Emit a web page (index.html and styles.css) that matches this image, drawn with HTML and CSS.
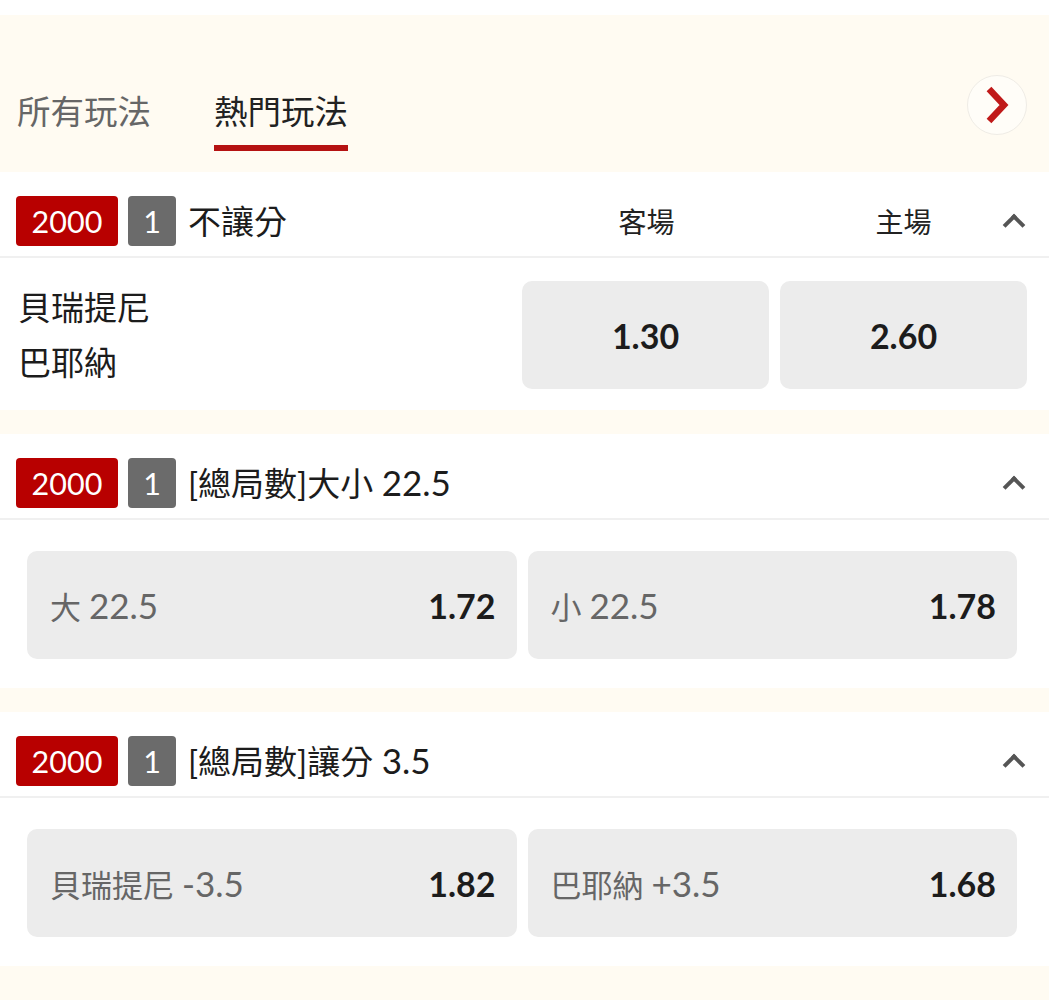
FILE: index.html
```html
<!DOCTYPE html>
<html lang="zh-Hant">
<head>
  <meta charset="UTF-8" />
  <meta name="viewport" content="width=device-width, initial-scale=1.0"/>
  <title>熱門玩法</title>
  <link rel="stylesheet" href="styles.css">
</head>
<body>

<div class="topbar"></div>

<div class="tabs">
  <a class="tab">所有玩法</a>
  <a class="tab active">熱門玩法</a>
  <button class="next">
    <svg width="24" height="38" viewBox="0 0 24 38"><path d="M4 3 L19 19 L4 35" fill="none" stroke="#c01a1a" stroke-width="6.5"/></svg>
  </button>
</div>

<section class="market">
  <div class="market-head">
    <span class="badge red">2000</span>
    <span class="badge gray">1</span>
    <span class="title">不讓分</span>
    <span class="col">客場</span>
    <span class="col">主場</span>
    <span class="caret"></span>
  </div>
  <div class="match">
    <div class="teams">
      <div>貝瑞提尼</div>
      <div>巴耶納</div>
    </div>
    <div class="odd">1.30</div>
    <div class="odd">2.60</div>
  </div>
</section>

<section class="market">
  <div class="market-head">
    <span class="badge red">2000</span>
    <span class="badge gray">1</span>
    <span class="title">[總局數]大小 <span class="num">22.5</span></span>
    <span class="caret"></span>
  </div>
  <div class="pair">
    <div class="pick"><span class="label">大 <span class="num">22.5</span></span><span class="price">1.72</span></div>
    <div class="pick"><span class="label">小 <span class="num">22.5</span></span><span class="price">1.78</span></div>
  </div>
</section>

<section class="market">
  <div class="market-head">
    <span class="badge red">2000</span>
    <span class="badge gray">1</span>
    <span class="title">[總局數]讓分 <span class="num">3.5</span></span>
    <span class="caret"></span>
  </div>
  <div class="pair">
    <div class="pick"><span class="label">貝瑞提尼 <span class="num">-3.5</span></span><span class="price">1.82</span></div>
    <div class="pick"><span class="label">巴耶納 <span class="num">+3.5</span></span><span class="price">1.68</span></div>
  </div>
</section>

</body>
</html>
```

FILE: styles.css
```css
body {
  font-family: Lato, "Noto Sans CJK TC", sans-serif;
  background: #fffbf2;
  color: #1c1c1c;
  margin: 0;
  padding: 0;
}
.topbar {
  height: 15px;
  background: #fff;
}
.tabs {
  height: 157px;
  display: flex;
  align-items: flex-end;
  padding: 0 22px 0 17px;
  gap: 63px;
}
.tab {
  font-size: 33.5px;
  color: #666;
  padding-bottom: 14px;
  line-height: 40px;
  border-bottom: 6px solid transparent;
  margin-bottom: 21px;
}
.tab.active {
  color: #222;
  border-bottom-color: #b51212;
}
.next {
  margin-left: auto;
  align-self: center;
  margin-top: 22px;
  width: 60px;
  height: 60px;
  border-radius: 50%;
  border: 1px solid #efece6;
  background: #fffdf8;
  display: flex;
  align-items: center;
  justify-content: center;
  padding: 0;
}
.market {
  background: #fff;
  margin-bottom: 24px;
}
.market-head {
  display: grid;
  grid-template-columns: auto auto 1fr 247px 247px;
  grid-auto-rows: 50px;
  align-items: center;
  column-gap: 10px;
  padding: 24px 22px 10px 16px;
  border-bottom: 2px solid #f0f0f0;
  position: relative;
}
.badge {
  color: #fff;
  font-size: 30.5px;
  height: 50px;
  line-height: 50px;
  border-radius: 4px;
  text-align: center;
}
.badge.red {
  background: #b80000;
  width: 102px;
}
.badge.gray {
  background: #6b6b6b;
  width: 48px;
}
.title {
  font-size: 33px;
  margin-left: 2px;
  line-height: 50px;
  white-space: nowrap;
}
.num {
  font-size: 35px;
  line-height: 1;
}
.col {
  font-size: 28px;
  text-align: center;
  color: #222;
}
.market-head .col:first-of-type {
  margin-left: -10px;
}
.caret {
  position: absolute;
  right: 27px;
  top: 45px;
  width: 12px;
  height: 12px;
  border-left: 4px solid #555;
  border-top: 4px solid #555;
  transform: rotate(45deg);
}
.match {
  display: grid;
  grid-template-columns: 1fr 247px 247px;
  column-gap: 11px;
  align-items: center;
  padding: 22px 22px 20px 18px;
}
.teams {
  font-size: 33px;
  line-height: 55px;
}
.odd {
  height: 108px;
  background: #ececec;
  border-radius: 10px;
  display: flex;
  align-items: center;
  justify-content: center;
  font-size: 34px;
  font-weight: bold;
}
.pair {
  display: grid;
  grid-template-columns: 1fr 1fr;
  column-gap: 11px;
  padding: 31px 32px 29px 27px;
}
.pick {
  height: 108px;
  background: #ececec;
  border-radius: 10px;
  display: flex;
  align-items: center;
  justify-content: space-between;
  padding: 0 21px 0 23px;
  font-size: 31px;
}
.label {
  color: #666;
}
.price {
  font-size: 34px;
  font-weight: bold;
  color: #1c1c1c;
}
```
